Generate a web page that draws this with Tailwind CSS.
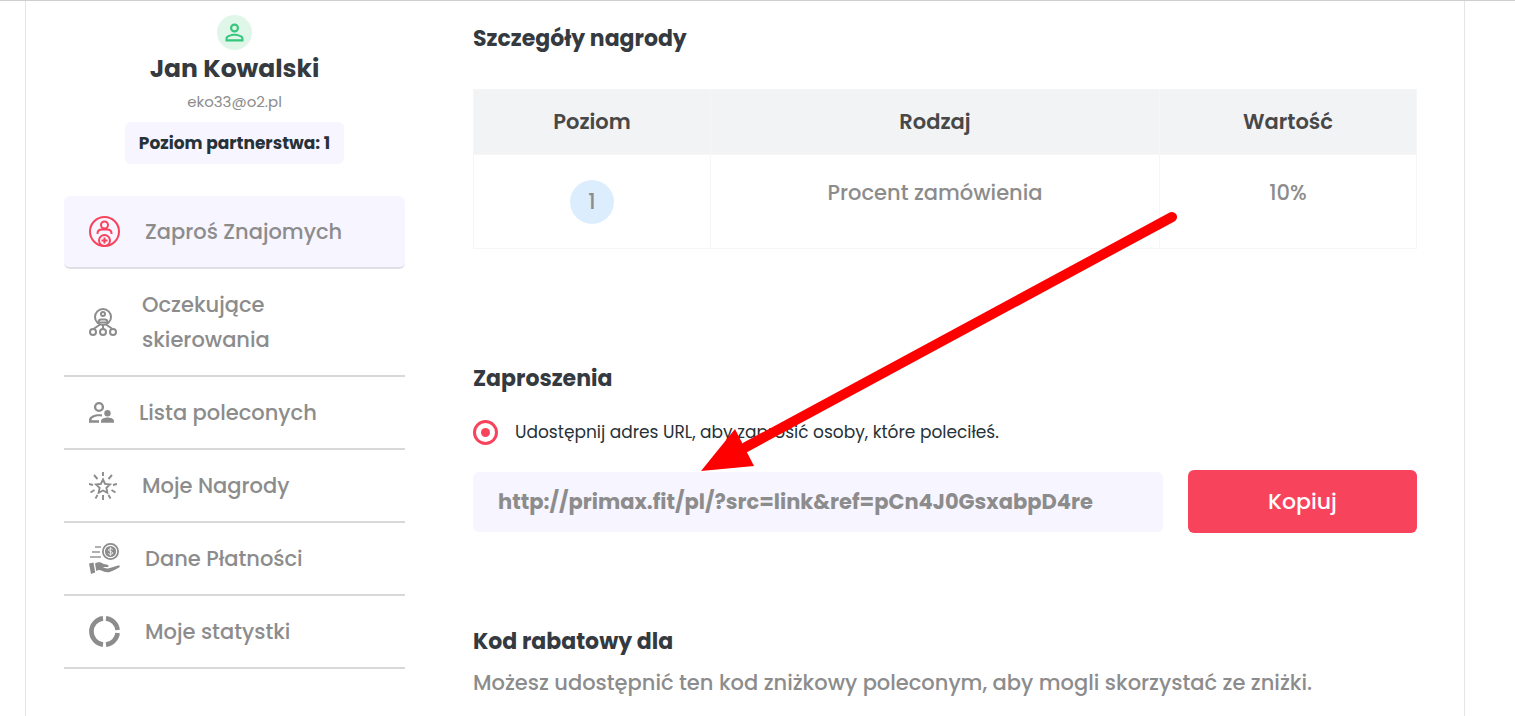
<!DOCTYPE html>
<html lang="pl">

<head>
  <meta charset="UTF-8" />
  <meta name="viewport" content="width=device-width, initial-scale=1.0" />
  <title>Zaproś Znajomych</title>
  <script src="https://cdn.jsdelivr.net/npm/@tailwindcss/browser@4"></script>
</head>

<body class="bg-white border-t border-[#cfcfcf] font-['Poppins','Inter',sans-serif] text-[#8c8c8c]">

  <div class="relative flex items-start gap-[68px] ml-[25px] mr-[50px] pl-[38px] pr-[47px] min-h-[calc(100vh-1px)] border-x border-[#e5e5e5]">

    <!-- Sidebar -->
    <aside class="w-[341px] shrink-0 pt-[14px]">
      <div class="flex flex-col items-center">
        <span class="flex items-center justify-center size-[35px] rounded-full bg-[#e0f6e9]">
          <svg class="size-[27px]" viewBox="0 0 24 24" fill="#34c77b">
            <path d="M12 5.900a2.100 2.100 0 1 1 0 4.200 2.100 2.100 0 0 1 0-4.200m0 9c2.970 0 6.100 1.460 6.100 2.100v1.100H5.900V17c0-.64 3.130-2.100 6.100-2.100M12 4a4 4 0 1 0 0 8 4 4 0 0 0 0-8zm0 9c-2.670 0-8 1.340-8 4v3h16v-3c0-2.660-5.330-4-8-4z" />
          </svg>
        </span>
        <h2 class="text-[25px] leading-[38px] font-bold text-[#343a40]">Jan Kowalski</h2>
        <p class="text-[15px] leading-[28px]">eko33@o2.pl</p>
        <p class="mt-[6px] px-[14px] rounded-md bg-[#f7f5ff] text-[17px] leading-[42px] font-bold text-[#263238]">Poziom partnerstwa: 1</p>
      </div>

      <nav class="mt-[32px] text-[21px] leading-[35px] font-medium">
        <a href="#" class="flex items-center gap-[25px] px-[25px] py-[18px] border-b-2 border-[#e0dfe6] rounded-md bg-[#f7f5ff]">
          <svg class="size-[31px] shrink-0" viewBox="0 0 31 31" fill="none" stroke="#f8435c" stroke-width="2">
            <circle cx="15.5" cy="15.5" r="14.5" />
            <circle cx="15.5" cy="9" r="3.5" />
            <path d="M8.500 18v-.5c0-2.500 2-4 4.500-4h5c2.500 0 4.500 1.500 4.500 4v.5" />
            <circle cx="15.5" cy="24.5" r="5.5" />
            <path d="M15.500 21.500v6M12.500 24.500h6" />
          </svg>
          <span>Zaproś Znajomych</span>
        </a>
        <a href="#" class="flex items-center gap-[25px] px-[25px] py-[18px] border-b-2 border-[#d8d8d8]">
          <svg class="size-[28px] shrink-0" viewBox="0 0 28 28" fill="none" stroke="#8c8c8c" stroke-width="2">
            <circle cx="14" cy="9" r="8" />
            <circle cx="14" cy="6" r="2" />
            <path d="M9.500 14.500v-.5c0-1.500 1-2.500 2.500-2.500h4c1.500 0 2.500 1 2.500 2.500v.5zM14 17v4M11 16.500l-6.500 4.500M17 16.500l6.500 4.500" />
            <circle cx="4" cy="24" r="3" />
            <circle cx="14" cy="24" r="3" />
            <circle cx="24" cy="24" r="3" />
          </svg>
          <span>Oczekujące skierowania</span>
        </a>
        <a href="#" class="flex items-center gap-[25px] px-[25px] py-[18px] border-b-2 border-[#d8d8d8]">
          <svg class="size-[25px] shrink-0" viewBox="0 0 25 25" fill="#8c8c8c">
            <circle cx="10" cy="7" r="3.9" fill="none" stroke="#8c8c8c" stroke-width="2.4" />
            <path d="M13 16.500v-2c-1-.2-2-.3-3-.3-4 0-10 1.800-10 5.500v3h10v-2.500H2.500v-.5c0-1.600 3.500-3.500 7.500-3.500 1 0 2 .1 3 .3z" />
            <circle cx="18.5" cy="13.3" r="3.2" />
            <path d="M12 22.700v-1.500c0-2.600 3.700-3.700 6.500-3.700s6.500 1.100 6.500 3.700v1.500z" />
          </svg>
          <span>Lista poleconych</span>
        </a>
        <a href="#" class="flex items-center gap-[25px] px-[25px] py-[18px] border-b-2 border-[#d8d8d8]">
          <svg class="size-[28px] shrink-0" viewBox="0 0 28 28" fill="none" stroke="#8c8c8c" stroke-width="1.9">
            <path d="M14 7.500l2.100 4.400 4.900.6-3.600 3.400.9 4.900-4.300-2.300-4.300 2.300.9-4.900L7 12.500l4.900-.6z" />
            <path d="M14 0v4M14 23v5M5 3l3.500 4M23 3l-3.500 4M0 12l4 1M28 12l-4 1M1.500 20.500L5.500 18M26.500 20.500L22.500 18M6.500 26.500L8.500 23M21.500 26.500L19.500 23" />
          </svg>
          <span>Moje Nagrody</span>
        </a>
        <a href="#" class="flex items-center gap-[25px] px-[25px] py-[18px] border-b-2 border-[#d8d8d8]">
          <svg class="size-[31px] shrink-0" viewBox="0 0 31 31" fill="#8c8c8c">
            <path d="M6 4h6M3 9h8M1 14h11" stroke="#b0b0b0" stroke-width="1.8" />
            <circle cx="21.5" cy="8.5" r="7.6" fill="none" stroke="#8c8c8c" stroke-width="1.8" />
            <circle cx="21.5" cy="8.5" r="5.6" />
            <path d="M23.700 6.500c-.4-1-4-1.300-4.200.5 0 2 4.200 1 4.200 3 0 1.800-3.900 1.700-4.400.4M21.500 4.200v8.600" fill="none" stroke="#e8e8e8" stroke-width="1" />
            <path d="M0 20.500l4.500-1 1.700 10L2 31z" />
            <path d="M6 20.500c3-1.800 6-1.500 8.500.5l4 .8c1.500.5 1.500 2.200-.5 2.200h-4c2 1.500 3.500 1.700 6 1.200l9-2.700c2-.5 2.500 1 1 2-3.500 2-6.500 3.800-10 4.700-4 .7-7-2.200-10.500-2.200L7.300 28z" />
          </svg>
          <span>Dane Płatności</span>
        </a>
        <a href="#" class="flex items-center gap-[25px] px-[25px] py-[18px] border-b-2 border-[#d8d8d8]">
          <svg class="size-[31px] shrink-0" viewBox="0 0 31 31" fill="none" stroke="#8c8c8c" stroke-width="4.6">
            <path d="M14 2.400a13.200 13.200 0 0 0 0 26.200M17 2.400a13.200 13.200 0 0 1 11.600 11.600M17 28.600a13.200 13.200 0 0 0 11.600-11.600" />
          </svg>
          <span>Moje statystki</span>
        </a>
      </nav>
    </aside>

    <!-- Main Content -->
    <main class="flex-1 min-w-0 pt-[20px]">
      <section>
        <h3 class="text-[22px] leading-[36px] font-bold text-[#343a40]">Szczegóły nagrody</h3>
        <table class="w-full mt-[32px] table-fixed border-collapse text-[21px] leading-[26px] text-center">
          <thead>
            <tr class="h-[65px] bg-[#f2f3f5] text-[#484848]">
              <th class="w-[237px] border border-[#f6f6f7] font-semibold">Poziom</th>
              <th class="border border-[#f6f6f7] font-semibold">Rodzaj</th>
              <th class="w-[257px] border border-[#f6f6f7] font-semibold">Wartość</th>
            </tr>
          </thead>
          <tbody>
            <tr class="h-[94px] align-top font-medium">
              <td class="pt-[25px] border border-[#f6f6f7]">
                <span class="inline-flex items-center justify-center size-[44px] rounded-full bg-[#dceefe]">1</span>
              </td>
              <td class="pt-[25px] border border-[#f6f6f7]">Procent zamówienia</td>
              <td class="pt-[25px] border border-[#f6f6f7]">10%</td>
            </tr>
          </tbody>
        </table>
      </section>

      <section class="mt-[112px]">
        <h3 class="text-[22px] leading-[36px] font-bold text-[#343a40]">Zaproszenia</h3>
        <div class="flex items-center gap-[17px] mt-[21px] text-[17px] leading-[28px] text-[#263238]">
          <input id="shareUrl" type="radio" name="share" checked
            class="appearance-none grid place-content-center size-[25px] rounded-full border-3 border-[#f8435c] before:size-[9px] before:rounded-full before:bg-[#f8435c]" />
          <label for="shareUrl">Udostępnij adres URL, aby zaprosić osoby, które poleciłeś.</label>
        </div>
        <div class="flex items-center gap-[25px] mt-[24px]">
          <input type="text" readonly aria-label="Adres URL polecenia" value="http://primax.fit/pl/?src=link&amp;ref=pCn4J0GsxabpD4re"
            class="flex-1 min-w-0 h-[60px] px-[25px] rounded-md bg-[#f7f5ff] text-[21px] font-bold" />
          <button type="button" class="w-[229px] h-[63px] rounded-md bg-[#f8435c] text-[22px] font-medium text-white">Kopiuj</button>
        </div>
      </section>

      <section class="mt-[91px]">
        <h3 class="text-[22px] leading-[36px] font-bold text-[#343a40]">Kod rabatowy dla</h3>
        <p class="mt-[5px] text-[21px] leading-[35px] font-medium">Możesz udostępnić ten kod zniżkowy poleconym, aby mogli skorzystać ze zniżki.</p>
      </section>
    </main>

    <!-- Arrow pointing at the link -->
    <svg class="absolute left-[675px] top-[210px] w-[477px] h-[261px] pointer-events-none" viewBox="0 0 477 261">
      <path d="M471 6L45 236" stroke="#f00" stroke-width="10" stroke-linecap="round" />
      <path d="M0 260l34-42 19 37z" fill="#f00" />
    </svg>
  </div>

</body>

</html>
